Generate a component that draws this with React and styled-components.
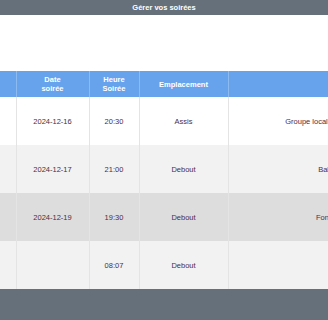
import React from 'react';
import styled, { createGlobalStyle } from 'styled-components';

const GlobalStyle = createGlobalStyle`
  html, body {
    margin: 0;
    padding: 0;
    background: #ffffff;
    font-family: "Liberation Sans", Arial, sans-serif;
    overflow: hidden;
  }
`;

const Page = styled.div`
  display: flex;
  flex-direction: column;
  height: 320px;
`;

const TopBar = styled.header`
  height: 15px;
  background-color: #66707a;
  color: #ffffff;
  font-size: 7.5px;
  font-weight: bold;
  display: flex;
  align-items: center;
  justify-content: center;
  flex-shrink: 0;
`;

const Spacer = styled.div`
  height: 56px;
  flex-shrink: 0;
`;

const TableWrap = styled.div`
  display: flex;
  justify-content: center;
  overflow: hidden;
  flex-shrink: 0;
`;

const Table = styled.table`
  border-collapse: collapse;
  table-layout: fixed;
  width: 568px;
  min-width: 568px;
  font-size: 7.5px;
`;

const HeadCell = styled.th`
  background-color: #67a3ec;
  color: #ffffff;
  font-weight: bold;
  height: 26px;
  padding: 0;
  line-height: 9px;
  text-align: center;
  vertical-align: middle;
  white-space: nowrap;
  border-left: 1px solid #8dbaf1;
  border-right: 1px solid #8dbaf1;
`;

const Row = styled.tr`
  background-color: ${(p) => p.$bg};
`;

const Cell = styled.td`
  height: 48px;
  padding: 0;
  color: #4e2c45;
  text-align: center;
  vertical-align: middle;
  white-space: nowrap;
  overflow: hidden;
  border-left: 1px solid #e4e4e4;
  border-right: 1px solid #e4e4e4;
`;

const Footer = styled.footer`
  flex: 1;
  background-color: #66707a;
`;

const columns = [
  { w: 136, label: 'Nom' },
  { w: 73, label: ['Date', 'soirée'] },
  { w: 50, label: ['Heure', 'Soirée'] },
  { w: 89, label: 'Emplacement' },
  { w: 220, label: 'Infos' },
];

const soirees = [
  { nom: 'Jazz', date: '2024-12-16', heure: '20:30', place: 'Assis', desc: 'Groupe local de jazz manouche', bg: '#ffffff' },
  { nom: 'Bal', date: '2024-12-17', heure: '21:00', place: 'Debout', desc: 'Bal musette', bg: '#f2f2f2' },
  { nom: 'Fondue', date: '2024-12-19', heure: '19:30', place: 'Debout', desc: 'Fondue party', bg: '#dddddd' },
  { nom: 'Test', date: '', heure: '08:07', place: 'Debout', desc: '', bg: '#f2f2f2' },
];

const App = () => {
  return (
    <Page>
      <GlobalStyle />
      <TopBar>Gérer vos soirées</TopBar>
      <Spacer />
      <TableWrap>
        <Table>
          <colgroup>
            {columns.map((c, i) => (
              <col key={i} style={{ width: c.w }} />
            ))}
          </colgroup>
          <thead>
            <tr>
              {columns.map((c, i) => (
                <HeadCell key={i}>
                  {Array.isArray(c.label) ? (
                    <>
                      {c.label[0]}
                      <br />
                      {c.label[1]}
                    </>
                  ) : (
                    c.label
                  )}
                </HeadCell>
              ))}
            </tr>
          </thead>
          <tbody>
            {soirees.map((s, i) => (
              <Row key={i} $bg={s.bg}>
                <Cell>{s.nom}</Cell>
                <Cell>{s.date}</Cell>
                <Cell>{s.heure}</Cell>
                <Cell>{s.place}</Cell>
                <Cell>{s.desc}</Cell>
              </Row>
            ))}
          </tbody>
        </Table>
      </TableWrap>
      <Footer />
    </Page>
  );
};

export default App;
